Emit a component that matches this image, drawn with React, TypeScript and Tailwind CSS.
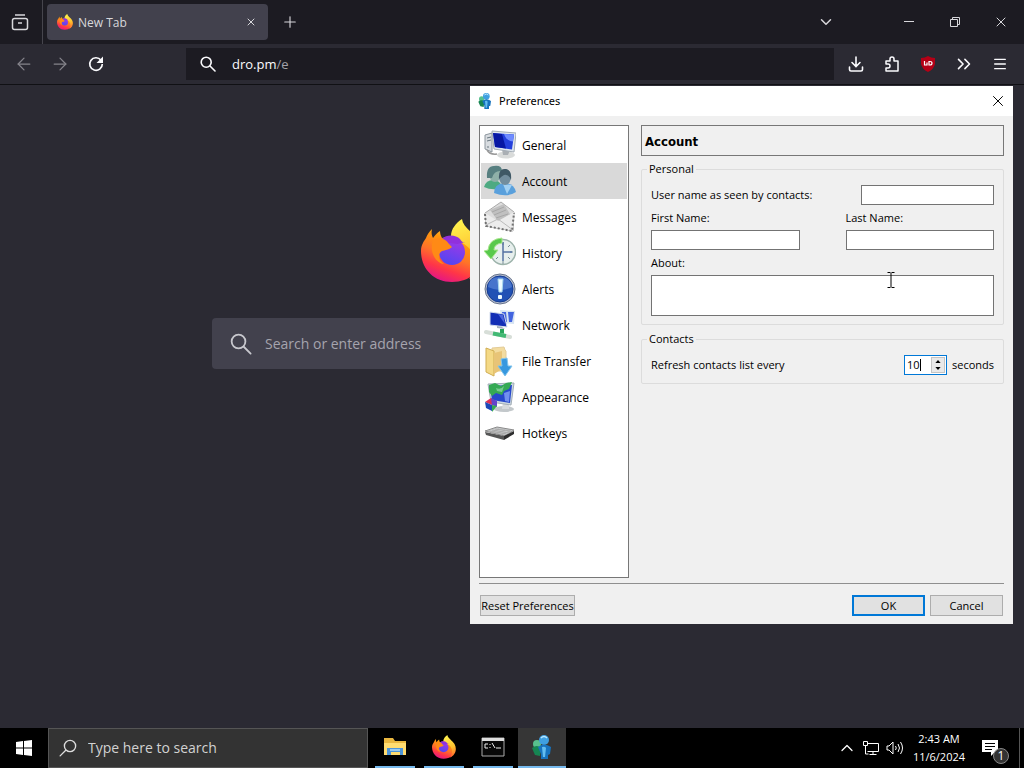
import { useState } from "react"
import type { ReactNode } from "react"
import { ArrowLeft, ArrowRight, ChevronDown, ChevronUp, ChevronsRight, Menu, Plus, X } from "lucide-react"

function FirefoxLogo({ className }: { className: string }) {
  return (
    <svg viewBox="0 0 64 64" className={className} aria-hidden="true">
      <defs>
        <linearGradient id="fx-body" x1="0.8" y1="0" x2="0.35" y2="1">
          <stop offset="0" stopColor="#fff44f" />
          <stop offset="0.3" stopColor="#ff980e" />
          <stop offset="0.55" stopColor="#ff7328" />
          <stop offset="0.78" stopColor="#ff3647" />
          <stop offset="1" stopColor="#e31587" />
        </linearGradient>
        <linearGradient id="fx-globe" x1="0.7" y1="0" x2="0.3" y2="1">
          <stop offset="0" stopColor="#a238e6" />
          <stop offset="1" stopColor="#4f46f2" />
        </linearGradient>
        <linearGradient id="fx-flame" x1="0.3" y1="0" x2="0.5" y2="1">
          <stop offset="0" stopColor="#fff44f" />
          <stop offset="0.6" stopColor="#ffc02e" />
          <stop offset="1" stopColor="#ff6a2c" />
        </linearGradient>
      </defs>
      <path
        d="M11 10c-1 4 0 7 1 9 2-3 4-5 7-7 0 3 1 5 2 7 10-3 21-1 29 6l10 3c5 20-8 35-29 35C12 63 0 49 0 32c0-6 3-10 5-13 1-3 3-6 6-9z"
        fill="url(#fx-body)"
      />
      <path d="M41 0c1 9 13 14 19 24 8 14 2 30-12 36 6-8 8-18 2-28-4-8-14-9-20-15 0-7 5-13 11-17z" fill="url(#fx-flame)" />
      <circle cx="31" cy="33" r="13" fill="url(#fx-globe)" />
      <path d="M21 20c5-5 14-4 18 0 1 2 3 4 6 4-6-1-8 1-8 1-6-1-11 0-16-5z" fill="#9130dc" />
      <path d="M12 21c7-4 13-1 16 4l3 3c-3 3-7 3-10 4-5 3-3 10 2 13-9-1-15-13-11-24z" fill="#ff8a16" />
    </svg>
  )
}

function MessengerLogo({ className }: { className: string }) {
  return (
    <svg viewBox="0 0 24 24" className={className} aria-hidden="true">
      <circle cx="7" cy="9" r="4" fill="#58c08e" />
      <path d="M2 13q5-4 9 0l-1 8-5-1z" fill="#168552" />
      <circle cx="14" cy="5" r="5" fill="#3f9fe0" />
      <path d="M8 12q6-5 13 0l-1 7-2 1v4h-7v-5z" fill="#1773be" />
      <path d="M12 12q3-1 4 1l-1 9h-2z" fill="#63bdf0" />
      <path d="M11 3q3-3 6 0" stroke="#b8e7ff" strokeWidth="1.5" fill="none" />
    </svg>
  )
}

function Magnifier({ className }: { className: string }) {
  return (
    <svg viewBox="0 0 16 16" className={className} fill="none" stroke="currentColor" strokeLinecap="round" aria-hidden="true">
      <circle cx="6.2" cy="6.2" r="5" />
      <path d="M10 10l5 5" />
    </svg>
  )
}

function GeneralIcon() {
  return (
    <svg viewBox="0 0 32 32" className="size-8" aria-hidden="true">
      <path d="M1 6l7-2v19l-7-3z" fill="#d8dce0" stroke="#8d969e" />
      <path d="M3 9l4-1M3 12l4-1M4 17v2" stroke="#697780" />
      <path d="M3 21q3 5 10 4" fill="none" stroke="#999" strokeWidth="1.5" />
      <ellipse cx="22" cy="26" rx="9" ry="3.500" fill="#d9dbda" />
      <path d="M18 20l8 1-2 5h-5z" fill="#aaafb4" />
      <path d="M8 2l24 2-2 19-20-3z" fill="#e0e7ee" stroke="#a3acb5" />
      <path d="M9 4l21 1.500-2 15-17-2.500z" fill="#2440dc" />
      <path d="M9 4l9 1 4 14.500-11-1.500z" fill="#0717a3" />
      <path d="M20 5l10 .5-1 7q-7-1-9-7.500z" fill="#6f8cff" />
    </svg>
  )
}

function AccountIcon() {
  return (
    <svg viewBox="0 0 32 32" className="size-8" aria-hidden="true">
      <path d="M0 22q2-7 9-7 7 0 9 7l-4 2q-8 1-14-2z" fill="#4eaa82" />
      <ellipse cx="11" cy="9" rx="6" ry="8" fill="#8fb0a8" />
      <path d="M3 13Q2 1 10 1q8-1 8 5-8-1-10 7z" fill="#577f80" />
      <path d="M10 28q0-9 10-10 10 0 12 9-9 6-22 1z" fill="#5aa0dc" />
      <path d="M19 19l4 10 5-9z" fill="#a2d0f2" />
      <ellipse cx="21" cy="12" rx="6" ry="8" fill="#728d9d" />
      <path d="M15 14q-1-11 7-10 6 1 5 11-2-6-7-5-2 1-5 4z" fill="#3f5865" />
    </svg>
  )
}

function MessagesIcon() {
  return (
    <svg viewBox="0 0 32 32" className="size-8" aria-hidden="true">
      <path d="M1 12L17 1l13 10-1 19L2 25z" fill="#ddd" stroke="#aaa" />
      <path d="M6 9l14-6 7 12-13 5z" fill="#c0c0c0" />
      <path d="M8 11l12-5M10 14l12-5M12 17l12-4" stroke="#a7a7a7" />
      <path d="M1 12l13 8 16-9-1 19L2 25z" fill="#ececec" />
      <path d="M2 24l12-6 15 11" stroke="#bbb" fill="none" />
      <path d="M1 13l1 12 26 5 2-18" stroke="#727272" strokeWidth="2" strokeDasharray="2 2" fill="none" />
    </svg>
  )
}

function HistoryIcon() {
  return (
    <svg viewBox="0 0 32 32" className="size-8" aria-hidden="true">
      <circle cx="19" cy="15" r="12.500" fill="#e7efed" stroke="#9db3ab" strokeWidth="1.500" />
      <path d="M19 5v3M29 15h-3M19 27v-3M26 8l-2 2M26 22l-2-2M12 22l2-2" stroke="#788d96" />
      <path d="M19 5v10h9M19 15v9" fill="none" stroke="#5573a2" strokeWidth="1.500" />
      <path d="M18 1Q5 2 4 13l-4 1 7 8 7-9h-4q0-6 8-7z" fill="#58c94c" stroke="#a8e58d" />
    </svg>
  )
}

function AlertsIcon() {
  return (
    <svg viewBox="0 0 32 32" className="size-8" aria-hidden="true">
      <circle cx="16" cy="16" r="15" fill="#b6bdce" stroke="#68748c" />
      <circle cx="16" cy="16" r="13" fill="#2051b5" stroke="#153c91" />
      <path d="M4 14Q5 3 17 4q10 1 11 10-12 6-24 0z" fill="#4774cc" />
      <path d="M14 6h5l-1 13h-3z" fill="#eefbff" stroke="#a8d8ef" />
      <rect x="14" y="22" width="4" height="4" rx="1" fill="#eefbff" />
    </svg>
  )
}

function NetworkIcon() {
  return (
    <svg viewBox="0 0 32 32" className="size-8" aria-hidden="true">
      <path d="M16 1l15 1-1 13-12-1z" fill="#d6e3f2" />
      <path d="M18 3h4l1 10h-4zM24 3h6l-2 10h-3z" fill="#4264df" />
      <path d="M6 3l14 2 3 13-17-2z" fill="#132eb5" stroke="#d3dced" />
      <path d="M14 5l5 1 2 9z" fill="#4c67df" />
      <path d="M13 17l5 1 3 2-8-1z" fill="#a5afbd" />
      <path d="M18 20v6" stroke="#2aa55c" strokeWidth="4" />
      <path d="M2 23l24 5" stroke="#d7ded8" strokeWidth="4" strokeLinecap="round" />
      <path d="M9 24.500l13 2.500" stroke="#43b974" strokeWidth="4" />
    </svg>
  )
}

function FileTransferIcon() {
  return (
    <svg viewBox="0 0 32 32" className="size-8" aria-hidden="true">
      <path d="M8 3l12-1 1 3 1 1v20H8z" fill="#f3dca0" stroke="#e3cc98" />
      <path d="M2 3l8 3v25l-8-4z" fill="#f4d986" stroke="#d0ad53" />
      <path d="M10 8l8-2v18l-8 5z" fill="#e8c477" />
      <path d="M17 14l6-1 1 8h4l-7 10-7-10h4z" fill="#3798df" stroke="#82c4ec" />
    </svg>
  )
}

function AppearanceIcon() {
  return (
    <svg viewBox="0 0 32 32" className="size-8" aria-hidden="true">
      <ellipse cx="20" cy="28" rx="10" ry="3" fill="#c3c8cb" />
      <path d="M19 21h6v7h-7z" fill="#d7dadd" />
      <path d="M4 3l26-1-3 22-20-3z" fill="#ccd8e1" stroke="#a2adb6" />
      <path d="M6 5l22-1-2 18-18-3z" fill="#2748cc" />
      <path d="M5 4l6-2 6 3 5-3 6-1-3 7-5 2-2 4-6-2-4 3-3-4z" fill="#35a954" />
      <path d="M12 7q5 2 8-2l-2 6-5-1z" fill="#78cb91" />
      <path d="M20 12l6-2-1 11-4-1z" fill="#7390ef" />
      <path d="M1 21l6-4 6 4-5 3z" fill="#db3156" />
      <path d="M7 17l6 3v6l-5-2z" fill="#6345cb" />
      <path d="M1 21l7 3v6l-6-3z" fill="#1b48b8" />
      <path d="M8 24l5 1-5 6z" fill="#35aa52" />
    </svg>
  )
}

function HotkeysIcon() {
  return (
    <svg viewBox="0 0 32 32" className="size-8" aria-hidden="true">
      <path d="M1 14l12-4 17 3-9 6z" fill="#c7c9ca" stroke="#8a8a8a" />
      <path d="M1 15l19 4v4L2 18z" fill="#555" />
      <path d="M20 19l10-5v3l-10 6z" fill="#2d2d2d" />
      <path d="M5 14l17 3M8 13l17 3M11 12l16 2M7 16l8-4M12 17l9-4M17 18l9-4" stroke="#aaa" />
    </svg>
  )
}

const SECTIONS = [
  { name: "General", icon: <GeneralIcon /> },
  { name: "Account", icon: <AccountIcon /> },
  { name: "Messages", icon: <MessagesIcon /> },
  { name: "History", icon: <HistoryIcon /> },
  { name: "Alerts", icon: <AlertsIcon /> },
  { name: "Network", icon: <NetworkIcon /> },
  { name: "File Transfer", icon: <FileTransferIcon /> },
  { name: "Appearance", icon: <AppearanceIcon /> },
  { name: "Hotkeys", icon: <HotkeysIcon /> },
]

function IconButton({ label, className = "", children }: { label: string; className?: string; children: ReactNode }) {
  return (
    <button type="button" aria-label={label} className={`flex size-8 shrink-0 items-center justify-center ${className}`}>
      {children}
    </button>
  )
}

function Browser() {
  return (
    <main className="flex flex-1 flex-col bg-[#2b2a33] text-[#fbfbfe]">
      <div className="flex h-11 items-center bg-[#1c1b22] pr-[7px] text-[#d8d8dc]">
        <div className="flex h-full w-[43px] items-center border-r border-[#46454d] pl-1">
          <IconButton label="Firefox View">
            <svg viewBox="0 0 18 18" className="size-[18px]" fill="none" stroke="currentColor" strokeWidth="1.5" aria-hidden="true">
              <path d="M4 2h10M7 10h4" />
              <rect x="1.5" y="5.5" width="15" height="11" rx="2" />
            </svg>
          </IconButton>
        </div>
        <div className="ml-1 flex h-9 w-[221px] items-center rounded bg-[#42414d] pl-2.5 pr-2">
          <FirefoxLogo className="size-4" />
          <span className="ml-[5px] flex-1 pt-px text-xs">New Tab</span>
          <button type="button" aria-label="Close tab" className="flex size-[18px] items-center justify-center">
            <X className="size-3" strokeWidth={2} />
          </button>
        </div>
        <IconButton label="New tab" className="ml-1.5">
          <Plus className="size-[18px]" strokeWidth={1.5} />
        </IconButton>
        <IconButton label="List all tabs" className="ml-auto mr-[51px]">
          <ChevronDown className="size-[18px]" strokeWidth={2} />
        </IconButton>
        <div className="flex gap-3.5">
          <IconButton label="Minimize">
            <svg viewBox="0 0 12 12" className="size-3" stroke="currentColor" aria-hidden="true">
              <path d="M1 5.5h10" />
            </svg>
          </IconButton>
          <IconButton label="Restore">
            <svg viewBox="0 0 12 12" className="size-3" fill="none" stroke="currentColor" aria-hidden="true">
              <path d="M3.5 3V1.5h7v7H9M1.5 3.5h7v7h-7z" />
            </svg>
          </IconButton>
          <IconButton label="Close browser">
            <X className="size-4" strokeWidth={1.5} />
          </IconButton>
        </div>
      </div>

      <nav className="flex h-[41px] items-center border-b border-[#101014] bg-[#2b2a33] px-2">
        <div className="flex gap-1">
          <IconButton label="Back" className="text-[#85848b]">
            <ArrowLeft className="size-5" strokeWidth={1.5} />
          </IconButton>
          <IconButton label="Forward" className="text-[#85848b]">
            <ArrowRight className="size-5" strokeWidth={1.5} />
          </IconButton>
          <IconButton label="Reload">
            <svg viewBox="0 0 16 16" className="size-4" aria-hidden="true">
              <path d="M13 4.2A6.3 6.3 0 1 0 14.3 8" fill="none" stroke="currentColor" strokeWidth="1.7" />
              <path d="M15 .5V7H8.5z" fill="currentColor" />
            </svg>
          </IconButton>
        </div>
        <div className="ml-[74px] flex h-8 min-w-0 flex-1 items-center bg-[#1c1b22] pl-3.5">
          <Magnifier className="size-4 shrink-0 stroke-[1.6]" />
          <div className="ml-4 flex min-w-0 flex-1 items-center pt-0.5 text-[13px]">
            <input aria-label="Address" defaultValue="dro.pm" className="field-sizing-content min-w-0 bg-transparent outline-none" />
            <span className="text-[#a2a1a8]">/e</span>
          </div>
        </div>
        <div className="ml-1.5 flex gap-1">
          <IconButton label="Downloads">
            <svg viewBox="0 0 16 16" className="size-4" fill="none" stroke="currentColor" strokeWidth="1.6" strokeLinecap="round" aria-hidden="true">
              <path d="M8 1v9M4 6.5L8 10.5l4-4M1.5 11v2.5q0 1.5 1.5 1.5h10q1.5 0 1.5-1.5V11" />
            </svg>
          </IconButton>
          <IconButton label="Extensions">
            <svg viewBox="0 0 16 16" className="size-4" fill="none" stroke="currentColor" strokeWidth="1.5" strokeLinejoin="round" aria-hidden="true">
              <path d="M2 5h4V3q0-2 2-2t2 2v2h4v10H2v-3h2q2 0 2-2T4 8H2z" />
            </svg>
          </IconButton>
          <IconButton label="uBlock Origin">
            <svg viewBox="0 0 16 16" className="size-4" aria-hidden="true">
              <path d="M8 0q3 2 7 2v6q-1 5-7 8-6-3-7-8V2q4 0 7-2z" fill="#b40016" />
              <path d="M4.500 5v4H7V6.500M9 5.500v3.500h1q2 0 2-1.750T10 5.500z" fill="none" stroke="white" strokeWidth="1.200" />
            </svg>
          </IconButton>
          <IconButton label="More tools">
            <ChevronsRight className="size-[22px]" strokeWidth={1.7} />
          </IconButton>
          <IconButton label="Menu">
            <Menu className="size-4" strokeWidth={2} />
          </IconButton>
        </div>
      </nav>

      <section className="flex flex-col items-center px-6 pt-[134px]">
        <div className="flex w-full max-w-[182px]">
          <FirefoxLogo className="size-16" />
        </div>
        <div className="mt-[35px] flex h-[51px] w-full max-w-[600px] items-center rounded bg-[#42414d] pl-[18px]">
          <Magnifier className="size-[22px] stroke-[1.3] text-[#c8c8ce]" />
          <input
            aria-label="Search or enter address"
            placeholder="Search or enter address"
            className="ml-[13px] min-w-0 flex-1 bg-transparent text-sm outline-none placeholder:text-[#a5a4ae]"
          />
        </div>
      </section>
    </main>
  )
}

function PreferencesWindow() {
  const [section, setSection] = useState("Account")
  const [seconds, setSeconds] = useState(10)

  const field = "h-5 min-w-0 border border-[#737373] bg-white px-1 outline-none"
  const group = "rounded-xs border border-[#dcdcdc] px-[9px]"

  return (
    <div
      role="dialog"
      aria-label="Preferences"
      className="absolute right-[11px] top-[86px] flex w-[543px] flex-col bg-[#f0f0f0] text-[11px] leading-4 text-black"
    >
      <header className="flex h-[30px] items-center bg-white pl-[7px]">
        <MessengerLogo className="size-4" />
        <h1 className="ml-1.5 flex-1 font-['Noto_Sans',sans-serif] text-[11px]">Preferences</h1>
        <button type="button" aria-label="Close preferences" className="flex h-8 w-[30px] items-center justify-center">
          <X className="size-[18px]" strokeWidth={1.3} />
        </button>
      </header>

      <div className="flex gap-3 px-[9px] pt-[9px]">
        <div className="flex h-[453px] w-[150px] flex-col border border-[#777] bg-white p-px">
          {SECTIONS.map((item) => (
            <button
              key={item.name}
              type="button"
              onClick={() => setSection(item.name)}
              className={`flex h-9 items-center gap-1.5 pl-[3px] text-xs ${section === item.name ? "bg-[#d9d9d9]" : ""}`}
            >
              {item.icon}
              <span className="pt-0.5">{item.name}</span>
            </button>
          ))}
        </div>

        <form className="min-w-0 flex-1 font-['Open_Sans',sans-serif]">
          <h2 className="flex h-[31px] items-center border border-[#777] px-[3px] pt-0.5 font-['DejaVu_Sans_Condensed','DejaVu_Sans',sans-serif] text-[13px] font-bold">
            {section}
          </h2>

          <fieldset className={`${group} mt-[5px] pb-2`}>
            <legend className="-ml-1 px-0.5">Personal</legend>
            <div className="mt-2 flex items-center justify-between">
              <label htmlFor="username">User name as seen by contacts:</label>
              <input id="username" className={`${field} w-[133px]`} />
            </div>
            <div className="mt-[5px] grid grid-cols-2 gap-[46px]">
              <label className="flex flex-col gap-1">
                First Name:
                <input className={field} />
              </label>
              <label className="flex flex-col gap-1">
                Last Name:
                <input className={field} />
              </label>
            </div>
            <label className="mt-[5px] flex flex-col gap-1">
              About:
              <textarea className="h-[41px] resize-none border border-[#737373] bg-white px-1 outline-none" />
            </label>
          </fieldset>

          <fieldset className={`${group} mt-1.5 pb-2`}>
            <legend className="-ml-1 px-0.5">Contacts</legend>
            <div className="mt-2 flex items-center">
              <label htmlFor="refresh" className="flex-1">
                Refresh contacts list every
              </label>
              <div className="mr-[5px] flex h-5 w-[43px] items-center border border-[#0078d7] bg-white pl-0.5">
                <input
                  id="refresh"
                  value={seconds}
                  onChange={(e) => setSeconds(Number(e.target.value) || 0)}
                  className="w-[13px] outline-none"
                />
                <span className="h-3 w-px bg-black" />
                <div className="ml-auto mr-px flex h-4 w-3.5 flex-col border border-[#c4c4c4] bg-[#e9e9e9]">
                  <button
                    type="button"
                    aria-label="Increase"
                    onClick={() => setSeconds(seconds + 1)}
                    className="flex flex-1 items-center justify-center"
                  >
                    <svg viewBox="0 0 7 4" className="h-[3px] w-1.5">
                      <path d="M0 4l3.500-4L7 4z" />
                    </svg>
                  </button>
                  <button
                    type="button"
                    aria-label="Decrease"
                    onClick={() => setSeconds(seconds - 1)}
                    className="flex flex-1 items-center justify-center"
                  >
                    <svg viewBox="0 0 7 4" className="h-[3px] w-1.5">
                      <path d="M0 0l3.500 4L7 0z" />
                    </svg>
                  </button>
                </div>
              </div>
              <span>seconds</span>
            </div>
          </fieldset>
        </form>
      </div>

      <footer className="mx-[9px] mt-[5px] flex items-center gap-[5px] border-t border-[#8f8f8f] px-px pb-2 pt-[11px] font-['Open_Sans',sans-serif]">
        <button type="button" className="mr-auto h-[21px] w-[95px] border border-[#adadad] bg-[#e1e1e1] whitespace-nowrap">
          Reset Preferences
        </button>
        <button type="button" className="h-[21px] w-[73px] border-2 border-[#0078d7] bg-[#e1e1e1]">
          OK
        </button>
        <button type="button" className="h-[21px] w-[73px] border border-[#adadad] bg-[#e1e1e1]">
          Cancel
        </button>
      </footer>

      {/* text cursor hovering over the About box */}
      <svg
        viewBox="0 0 8 16"
        className="pointer-events-none absolute left-[417px] top-[186px] h-4 w-2"
        fill="none"
        stroke="black"
        aria-hidden="true"
      >
        <path d="M.5.5h3M4.500.5h3M4 1v14M.5 15.500h3M4.500 15.500h3" />
      </svg>
    </div>
  )
}

function TaskbarApp({ label, active = false, children }: { label: string; active?: boolean; children: ReactNode }) {
  return (
    <button type="button" aria-label={label} className={`flex w-12 flex-col items-center ${active ? "bg-[#363636]" : ""}`}>
      <span className="flex flex-1 items-center">{children}</span>
      <span className={`h-0.5 bg-[#76b9ed] ${active ? "w-full" : "w-10"}`} />
    </button>
  )
}

function Taskbar() {
  return (
    <footer className="flex h-10 bg-black text-white">
      <button type="button" aria-label="Start" className="flex w-12 items-center justify-center">
        <svg viewBox="0 0 16 16" className="size-4" fill="white" aria-hidden="true">
          <path d="M0 2l7-1v6.500H0zM8 1l8-1v7.500H8zM0 8.500h7V15l-7-1zM8 8.500h8V16l-8-1z" />
        </svg>
      </button>
      <div className="flex w-80 items-center border border-[#555] bg-[#333] pl-2.5">
        <Magnifier className="size-[18px] -scale-x-100 stroke-[1.2] text-[#ddd]" />
        <input
          aria-label="Type here to search"
          placeholder="Type here to search"
          className="ml-[11px] min-w-0 flex-1 bg-transparent text-sm outline-none placeholder:text-[#d2d2d2]"
        />
      </div>
      <div className="ml-[3px] flex gap-px">
        <TaskbarApp label="File Explorer">
          <svg viewBox="0 0 22 20" className="h-5 w-[22px]" aria-hidden="true">
            <path d="M0 1h9l2 3h11v14H0z" fill="#e9b740" />
            <path d="M0 6h22v12H0z" fill="#ffdc70" />
            <path d="M3 18v-7h16v7h-3v-3H7v3z" fill="#4c94d8" />
            <path d="M6 12h10v2H6z" fill="#9acbf0" />
          </svg>
        </TaskbarApp>
        <TaskbarApp label="Firefox">
          <FirefoxLogo className="size-6" />
        </TaskbarApp>
        <TaskbarApp label="Command Prompt">
          <svg viewBox="0 0 24 20" className="h-5 w-6" aria-hidden="true">
            <path d="M1 1h22v18H1z" fill="#080808" stroke="#aaa" />
            <path d="M1 1h22v3H1z" fill="#ddd" />
            <path d="M7 7H4v4h3M9 7v1m0 2v1M11 6l3 5M15 11h5" fill="none" stroke="#eee" />
          </svg>
        </TaskbarApp>
        <TaskbarApp label="Messenger" active>
          <MessengerLogo className="size-6" />
        </TaskbarApp>
      </div>
      <div className="ml-auto flex items-center">
        <button type="button" aria-label="Show hidden icons" className="flex w-6 justify-center">
          <ChevronUp className="size-5" strokeWidth={1.5} />
        </button>
        <button type="button" aria-label="Network" className="flex w-6 justify-center">
          <svg viewBox="0 0 16 16" className="size-4" fill="none" stroke="white" aria-hidden="true">
            <path d="M4.500 3.500h11v8h-11M10 12v2M6.500 14.500h7M.5 1.500h4v4h-4zM2.500 6v8h3" />
          </svg>
        </button>
        <button type="button" aria-label="Volume" className="flex w-6 justify-center">
          <svg viewBox="0 0 18 16" className="h-4 w-[18px]" fill="none" stroke="white" aria-hidden="true">
            <path d="M1 6h2l4-4v12l-4-4H1zM9.500 6q1.500 2 0 4M12 4q3 4 0 8M14.500 2q4 6 0 12" />
          </svg>
        </button>
        <time className="w-16 text-center text-[11px] leading-[18px]">
          2:43 AM
          <br />
          11/6/2024
        </time>
        <button type="button" aria-label="1 notification" className="relative ml-2.5 mr-3.5 size-6">
          <svg viewBox="0 0 24 24" className="size-6" aria-hidden="true">
            <path d="M1 4h16v12h-3l-4 4v-4H1z" fill="white" />
            <path d="M4 7.500h10M4 10.500h10M4 13.500h7" stroke="black" />
          </svg>
          <span className="absolute -bottom-1 -right-1 flex size-4 items-center justify-center rounded-full border border-[#888] bg-[#333] text-xs">
            1
          </span>
        </button>
        <span className="h-10 border-l border-[#555] pr-1" />
      </div>
    </footer>
  )
}

export default function App() {
  return (
    <div className="relative flex min-h-screen flex-col font-['Open_Sans','Noto_Sans',sans-serif]">
      <Browser />
      <PreferencesWindow />
      <Taskbar />
    </div>
  )
}
